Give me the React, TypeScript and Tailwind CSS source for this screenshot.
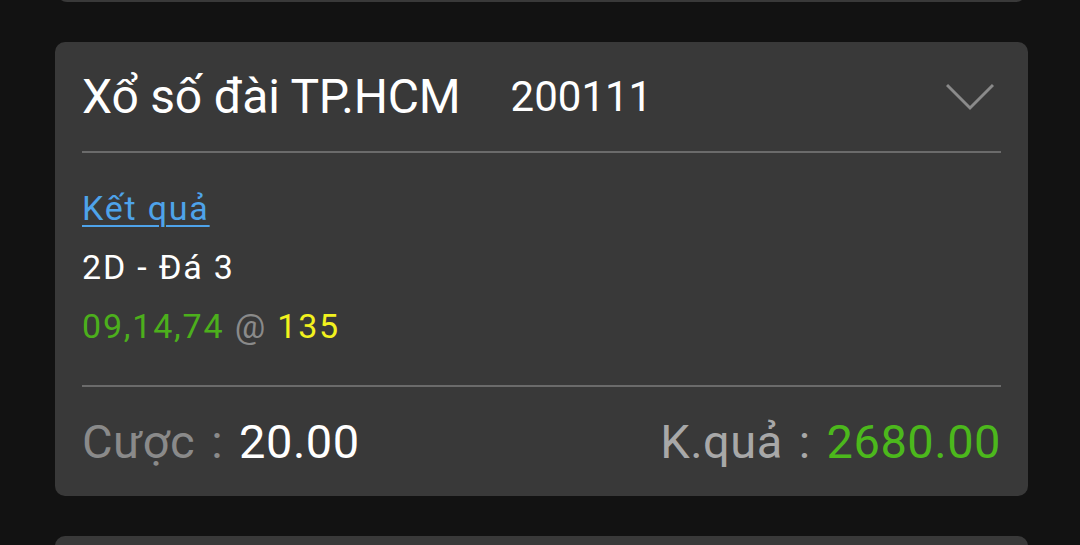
import React from "react";

export default function App() {
  return (
    <div
      className="w-[1080px] h-[545px] overflow-hidden bg-[#121212] pl-[55px] pr-[52px]"
      style={{ fontFamily: "Roboto, 'Noto Sans', sans-serif" }}
    >
      <div className="h-[10px] -mt-[8px] mx-[2px] rounded-b-[10px] bg-[#393939]" />
      <div className="mt-[40px] rounded-[10px] bg-[#393939] px-[27px]">
        <div className="h-[109px] flex items-center">
          <span className="text-[48px] text-white leading-none tracking-[-0.2px]">Xổ số đài TP.HCM</span>
          <span className="ml-[50px] text-[42px] text-white leading-none">200111</span>
          <svg className="ml-auto mr-[7px]" width="48" height="28" viewBox="0 0 48 28">
            <path d="M1 2 L24 25 L47 2" fill="none" stroke="#8a8a8a" strokeWidth="3" />
          </svg>
        </div>
        <div className="h-[2px] bg-[#6b6b6b]" />
        <div className="pt-[26px] pb-[29px] text-[34px] leading-[59px] tracking-[1.8px]">
          <div>
            <span className="text-[#4ea3ea] underline underline-offset-[5px] decoration-[2px]">Kết quả</span>
          </div>
          <div className="text-white">2D - Đá 3</div>
          <div>
            <span className="text-[#4caf1c]">09,14,74</span>
            <span className="text-[#8a8a8a]"> @ </span>
            <span className="text-[#f2f21e]">135</span>
          </div>
        </div>
        <div className="h-[2px] bg-[#6b6b6b]" />
        <div className="h-[109px] flex items-center justify-between text-[47px] leading-none tracking-[0.5px]">
          <div className="flex items-center">
            <span className="text-[#8a8a8a]">Cược</span>
            <span className="text-[#8a8a8a] mx-[16px]">:</span>
            <span className="text-white">20.00</span>
          </div>
          <div className="flex items-center">
            <span className="text-[#a8a8a8]">K.quả</span>
            <span className="text-[#a8a8a8] mx-[16px]">:</span>
            <span className="text-[#4cb81c]">2680.00</span>
          </div>
        </div>
      </div>
      <div className="mt-[40px] h-[40px] rounded-t-[10px] bg-[#393939]" />
    </div>
  );
}
